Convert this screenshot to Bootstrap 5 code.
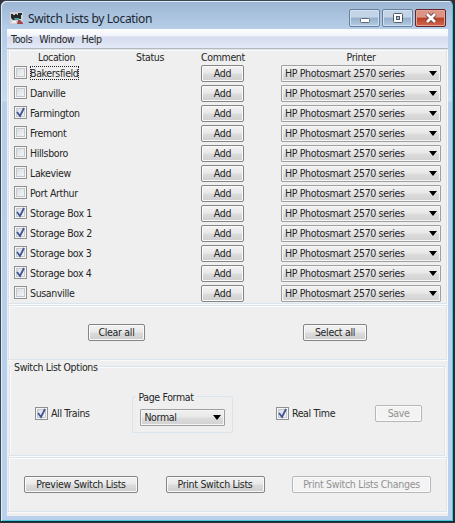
<!DOCTYPE html>
<html lang="en">
<head>
<meta charset="utf-8">
<title>Switch Lists by Location</title>
<link href="https://cdn.jsdelivr.net/npm/bootstrap@5.3.0/dist/css/bootstrap.min.css" rel="stylesheet">
<style>
html{background:#222}
body{width:455px;height:523px;overflow:hidden;background:#303038;font:10.5px/14px "DejaVu Sans Condensed","DejaVu Sans",sans-serif;font-stretch:condensed;letter-spacing:-.35px;color:#262626}
.window{width:455px;height:522px;padding:0 5px 4px;border:1px solid #3c4650;border-right:2px solid #17333a;border-bottom-color:#0b3036;border-radius:6px 6px 0 0;background:linear-gradient(#9cb5d2,#b6cee8 28px,#c3d9f0 90px,#c9def3 100px,#b6cee9 101px,#b9d1ec);box-shadow:inset 1px 1px #e1edf8,inset -1px -1px #4cc5df}
.titlebar{height:28px;padding:0 2px 0 4px}
.caption{font:12px/20px "Noto Sans",sans-serif;letter-spacing:-.36px;margin-left:5px;color:#1b2733;white-space:nowrap}
.loco{width:13px;height:13px;margin-top:10px}
.controls{gap:2px}
.winbtn{width:31px;height:18px;border:1px solid #66809f;border-radius:2px;box-shadow:inset 0 0 0 1px #d2e0ef;background:linear-gradient(#c3d4e7 45%,#94aeca 50%,#b4cce4);padding:0}
.winbtn svg{display:block}
.winbtn.closer{border-color:#64242a;box-shadow:inset 0 0 0 1px #e2a597;background:linear-gradient(#dc9485 45%,#b93f27 50%,#d0684d)}
.client{width:441px;height:487px;margin-left:1px;background:#efefef}
.menus{height:20px;padding:3px 4px 0;gap:7px;background:linear-gradient(#fff,#eff2fa 7px,#d6dbee 8px,#e2e8f6 18px);border-bottom:1px solid #b8b8b8}
.pane{border:1px solid #d9e4ec;box-shadow:inset 1px 1px #fbfbfb,1px 1px #fbfbfb;width:439px;margin-left:1px}
.list-pane{height:255px;padding:0 0 0 5px}
.line{display:grid;grid-template-columns:85px 102px 43px 37px 160px;height:20px;padding-bottom:1px;align-items:center}
.line.heads{height:14px;padding:0;text-align:center}
.heads span{white-space:nowrap}
.tick{width:13px;height:13px;border:1px solid #8e8f8f;box-shadow:inset 0 0 0 1px #f6f6f6,inset 0 0 0 2px #c5c8cd;background:linear-gradient(135deg,#d5d8de,#fafafa);flex:none}
.tick svg{display:block;margin:-1px}
.tick + span{margin-left:3px;white-space:nowrap}
.line .tick{margin-top:-2px}
.line .tick + span{margin-top:-2px}
.focused{outline:1px dotted #222;outline-offset:-1px}
.push{height:17px;padding:0 0 1px;border:1px solid #848484;border-radius:2px;background:linear-gradient(#f3f3f3,#e9e9e9 48%,#dcdcdc 52%,#cecece);box-shadow:inset 0 0 0 1px #fafafa;font-size:10.5px;line-height:14px;letter-spacing:-.3px;color:#262626;white-space:nowrap}
.push:disabled{background:#f3f3f3;border-color:#b4b8bb;color:#929292;opacity:1}
.combo{height:17px;border:1px solid #a0a0a0;border-radius:1px;background:linear-gradient(#f1f1f1,#e8e8e8 48%,#dddddd 52%,#d1d1d1);box-shadow:inset 0 0 0 1px #f5f5f5;padding:0 3px 1px;white-space:nowrap}
.drop{border:4px solid transparent;border-top:5px solid #000;border-bottom:0}
.w-add{width:43px}.w-clear{width:57px}.w-select{width:64px}.w-preview{width:114px}.w-print{width:99px}.w-changes{width:139px}.w-save{width:47px}
.bulk-pane{height:55px;padding:18px 79px 0 79px;margin-top:1px}
.options{position:relative;width:436px;height:90px;margin:6px 0 0 2px;padding:38px 22px 0 25px}
.legend-text{position:absolute;background:#efefef;padding:0 2px;top:-7px;left:2px;white-space:nowrap}
.all-trains{width:98px;margin-top:1px}
.format{position:relative;border:1px solid #d9e4ec;border-radius:2px;width:101px;height:37px;padding:12px 7px 0;margin-top:-9px}
.format .legend-text{left:3px}
.real{width:100px;margin:1px 0 0 43px}
.print-pane{height:55px;padding:18px 15px 0;margin-top:1px}
</style>
<script src="https://cdn.jsdelivr.net/npm/bootstrap@5.3.0/dist/js/bootstrap.bundle.min.js"></script>
</head>
<body>
<div class="window">
 <header class="titlebar d-flex align-items-start">
  <svg class="loco flex-shrink-0" viewBox="0 0 13 13"><path fill="#d3cfd2" d="M0 1h13v12H0z"/><path fill="#24292b" d="M1 3h2v1h2V3h2v1h1V2h4v2h-1v4H8L5 9H3L1 7z"/><path fill="#3fa7a5" d="M4 7h5v2H5z"/><path fill="#a4434b" d="M8 9h2l3 3v1H7z"/><path fill="#eee" d="M2 10h4v2H2z"/></svg>
  <span class="caption mt-2">Switch Lists by Location</span>
  <div class="d-flex ms-auto pt-2 controls">
   <button class="winbtn" aria-label="Minimize"><svg width="29" height="16"><rect x="10.5" y="8.5" width="9" height="4" rx="1" fill="#fff" stroke="#5f6b78"/></svg></button>
   <button class="winbtn" aria-label="Maximize"><svg width="29" height="16"><rect x="10.5" y="3.5" width="9" height="9" rx="1" fill="#fff" stroke="#535c66"/><rect x="13.5" y="6.5" width="3" height="3" fill="#a8bfd7" stroke="#535c66"/></svg></button>
   <button class="winbtn closer" aria-label="Close"><svg width="29" height="16"><path d="m11 4 8 8m0-8-8 8" stroke="#66383a" stroke-width="4.5"/><path d="m11 4 8 8m0-8-8 8" stroke="#fff" stroke-width="2.7"/></svg></button>
  </div>
 </header>
 <main class="client">
  <nav class="menus d-flex"><span>Tools</span><span>Window</span><span>Help</span></nav>
  <section class="pane list-pane">
   <div class="line heads"><span>Location</span><span>Status</span><span>Comment</span><span></span><span>Printer</span></div>
   <div id="locations"></div>
  </section>
  <section class="pane bulk-pane d-flex justify-content-between align-items-start"><button class="push w-clear">Clear all</button><button class="push w-select">Select all</button></section>
  <section class="pane options d-flex align-items-start">
   <span class="legend-text">Switch List Options</span>
   <div class="all-trains d-flex align-items-center"><i class="tick"><svg width="13" height="13"><path d="m3 6 3 4 4-8" fill="none" stroke="#405596" stroke-width="1.8"/></svg></i><span>All Trains</span></div>
   <div class="format"><span class="legend-text">Page Format</span><div class="combo d-flex align-items-center justify-content-between"><span>Normal</span><i class="drop"></i></div></div>
   <div class="real d-flex align-items-center"><i class="tick"><svg width="13" height="13"><path d="m3 6 3 4 4-8" fill="none" stroke="#405596" stroke-width="1.8"/></svg></i><span>Real Time</span></div>
   <button class="push w-save" disabled>Save</button>
  </section>
  <section class="pane print-pane d-flex justify-content-between align-items-start"><button class="push w-preview">Preview Switch Lists</button><button class="push w-print">Print Switch Lists</button><button class="push w-changes" disabled>Print Switch Lists Changes</button></section>
 </main>
</div>
<script>
const names=['Bakersfield','Danville','Farmington','Fremont','Hillsboro','Lakeview','Port Arthur','Storage Box 1','Storage Box 2','Storage box 3','Storage box 4','Susanville'];
const checked=[2,7,8,9,10];
const mark='<svg width="13" height="13"><path d="m3 6 3 4 4-8" fill="none" stroke="#405596" stroke-width="1.8"/></svg>';
document.getElementById('locations').innerHTML=names.map((n,i)=>`<div class="line"><div class="d-flex align-items-center"><i class="tick">${checked.includes(i)?mark:''}</i><span class="${i?'':'focused'}">${n}</span></div><span></span><button class="push w-add">Add</button><span></span><div class="combo d-flex align-items-center justify-content-between"><span>HP Photosmart 2570 series</span><i class="drop"></i></div></div>`).join('');
</script>
</body>
</html>
